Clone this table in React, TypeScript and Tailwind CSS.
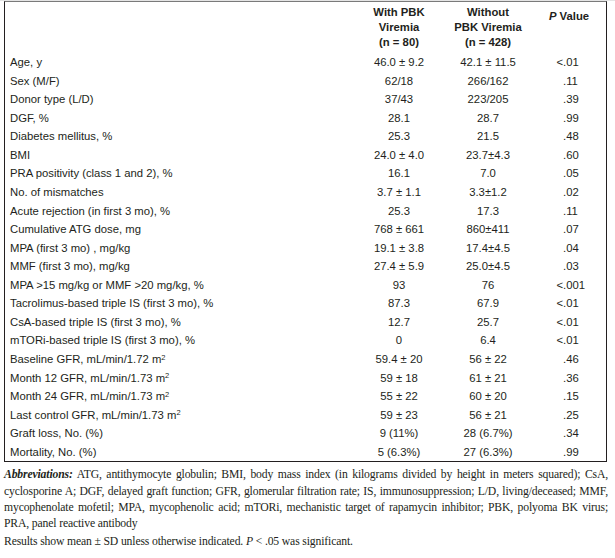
import React from "react";

type Row = [React.ReactNode, string, string, string];

const M2 = (s: string) => (
  <>
    {s} m<sup className="text-[7.5px] top-[-0.45em]">2</sup>
  </>
);

const rows: Row[] = [
  ["Age, y", "46.0 ± 9.2", "42.1 ± 11.5", "<.01"],
  ["Sex (M/F)", "62/18", "266/162", ".11"],
  ["Donor type (L/D)", "37/43", "223/205", ".39"],
  ["DGF, %", "28.1", "28.7", ".99"],
  ["Diabetes mellitus, %", "25.3", "21.5", ".48"],
  ["BMI", "24.0 ± 4.0", "23.7±4.3", ".60"],
  ["PRA positivity (class 1 and 2), %", "16.1", "7.0", ".05"],
  ["No. of mismatches", "3.7 ± 1.1", "3.3±1.2", ".02"],
  ["Acute rejection (in first 3 mo), %", "25.3", "17.3", ".11"],
  ["Cumulative ATG dose, mg", "768 ± 661", "860±411", ".07"],
  ["MPA (first 3 mo) , mg/kg", "19.1 ± 3.8", "17.4±4.5", ".04"],
  ["MMF (first 3 mo), mg/kg", "27.4 ± 5.9", "25.0±4.5", ".03"],
  ["MPA >15 mg/kg or MMF >20 mg/kg, %", "93", "76", "<.001"],
  ["Tacrolimus-based triple IS (first 3 mo), %", "87.3", "67.9", "<.01"],
  ["CsA-based triple IS (first 3 mo), %", "12.7", "25.7", "<.01"],
  ["mTORi-based triple IS (first 3 mo), %", "0", "6.4", "<.01"],
  [M2("Baseline GFR, mL/min/1.72"), "59.4 ± 20", "56 ± 22", ".46"],
  [M2("Month 12 GFR, mL/min/1.73"), "59 ± 18", "61 ± 21", ".36"],
  [M2("Month 24 GFR, mL/min/1.73"), "55 ± 22", "60 ± 20", ".15"],
  [M2("Last control GFR, mL/min/1.73"), "59 ± 23", "56 ± 21", ".25"],
  ["Graft loss, No. (%)", "9 (11%)", "28 (6.7%)", ".34"],
  ["Mortality, No. (%)", "5 (6.3%)", "27 (6.3%)", ".99"],
];

function PVal({ v }: { v: string }) {
  const lt = v.startsWith("<");
  return (
    <div className="flex">
      <span className="w-[31px] text-right">{lt ? "<" : ""}</span>
      <span>{lt ? v.slice(1) : v}</span>
    </div>
  );
}

export default function App() {
  return (
    <div className="w-[615px] h-[558px] bg-white text-[#231f20] overflow-hidden">
      <div className="h-[1px] bg-[#e4e4e4]" />
      <div className="ml-[4px] w-[603px] border border-[#231f20] border-t-[#7a7a7a] font-['Liberation_Sans',Arial,sans-serif] text-[11.3px]">
        <div className="grid grid-cols-[349px_90px_88px_1fr] h-[51px] pt-[3.4px] font-bold leading-[14.6px] text-center">
          <div />
          <div>
            With PBK
            <br />
            Viremia
            <br />
            (n = 80)
          </div>
          <div>
            Without
            <br />
            PBK Viremia
            <br />
            (n = 428)
          </div>
          <div className="pt-[4px]">
            <span className="italic">P</span> Value
          </div>
        </div>
        {rows.map((r, i) => (
          <div
            key={i}
            className="grid grid-cols-[349px_90px_88px_1fr] h-[18.57px] leading-[18.57px]"
          >
            <div className="pl-[5px] whitespace-nowrap">{r[0]}</div>
            <div className="text-center whitespace-nowrap">{r[1]}</div>
            <div className="text-center whitespace-nowrap">{r[2]}</div>
            <PVal v={r[3]} />
          </div>
        ))}
      </div>
      <div className="mt-[5px] pl-[4px] pr-[7px] font-['Liberation_Serif','Times_New_Roman',serif] text-[11.7px] tracking-[-0.15px] leading-[16.3px] text-[#231f20]">
        <div className="text-justify [text-align-last:justify]">
          <span className="font-bold italic">Abbreviations:</span> ATG, antithymocyte globulin; BMI, body mass index (in kilograms divided by height in meters squared); CsA,
        </div>
        <div className="text-justify [text-align-last:justify]">
          cyclosporine A; DGF, delayed graft function; GFR, glomerular filtration rate; IS, immunosuppression; L/D, living/deceased; MMF,
        </div>
        <div className="text-justify [text-align-last:justify]">
          mycophenolate mofetil; MPA, mycophenolic acid; mTORi, mechanistic target of rapamycin inhibitor; PBK, polyoma BK virus;
        </div>
        <div>PRA, panel reactive antibody</div>
        <div className="mt-[1px]">
          Results show mean ± SD unless otherwise indicated. <span className="italic">P</span> &lt; .05 was significant.
        </div>
      </div>
    </div>
  );
}
